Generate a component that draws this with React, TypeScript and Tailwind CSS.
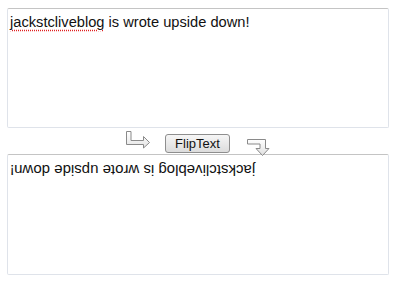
function ArrowRight() {
  return (
    <svg width="26" height="19" viewBox="0 0 26 19" className="block">
      <defs>
        <linearGradient id="ar" x1="0" y1="0" x2="0" y2="1">
          <stop offset="0" stopColor="#ffffff" />
          <stop offset="1" stopColor="#e4e4e4" />
        </linearGradient>
      </defs>
      <path
        d="M1.5 1.5 H6 V10.5 H18.5 V6.5 L24.5 12.5 L18.5 18 V14.5 H1.5 Z"
        fill="url(#ar)"
        stroke="#8a8a8a"
        strokeWidth="1"
      />
    </svg>
  );
}

function ArrowDown() {
  return (
    <svg width="26" height="19" viewBox="0 0 26 19" className="block">
      <defs>
        <linearGradient id="ad" x1="0" y1="0" x2="0" y2="1">
          <stop offset="0" stopColor="#ffffff" />
          <stop offset="1" stopColor="#e0e0e0" />
        </linearGradient>
      </defs>
      <path
        d="M1.5 1.5 H19.5 V10.5 H23 L16.5 17.5 L10 10.5 H14 V6 H1.5 Z"
        fill="url(#ad)"
        stroke="#8a8a8a"
        strokeWidth="1"
      />
    </svg>
  );
}

export default function App() {
  return (
    <div className="w-[400px] h-[285px] bg-white pt-2 px-[7px] font-['Liberation_Sans',Arial,sans-serif] text-[15px] text-[#111]">
      {/* Source box */}
      <div className="h-[120px] w-[382px] rounded-[2px] border border-[#dfe3ea] border-t-[#c4c4c4] px-[2px] pt-[5px] text-[14.67px] leading-[17px]">
        <span className="underline decoration-dotted decoration-[#e02020] underline-offset-[3px]">
          jackstcliveblog
        </span>{" "}
        is wrote upside down!
      </div>

      {/* Controls */}
      <div className="flex h-[26px] items-start">
        <div className="ml-[118px] mt-[2px]">
          <ArrowRight />
        </div>
        <button className="ml-[14px] mt-[6px] h-[19px] w-[65px] rounded-[3px] border border-[#8e8e8e] bg-gradient-to-b from-[#f6f6f6] to-[#dcdcdc] text-[13px] leading-[17px] text-[#111]">
          FlipText
        </button>
        <div className="ml-[16px] mt-[10px]">
          <ArrowDown />
        </div>
      </div>

      {/* Flipped box */}
      <div className="h-[121px] w-[382px] rounded-[2px] border border-[#dfe3ea] border-t-[#c4c4c4] px-[2px] pt-[7px] leading-[17px]">
        <span className="inline-block rotate-180">jackstcliveblog is wrote upside down!</span>
      </div>
    </div>
  );
}
